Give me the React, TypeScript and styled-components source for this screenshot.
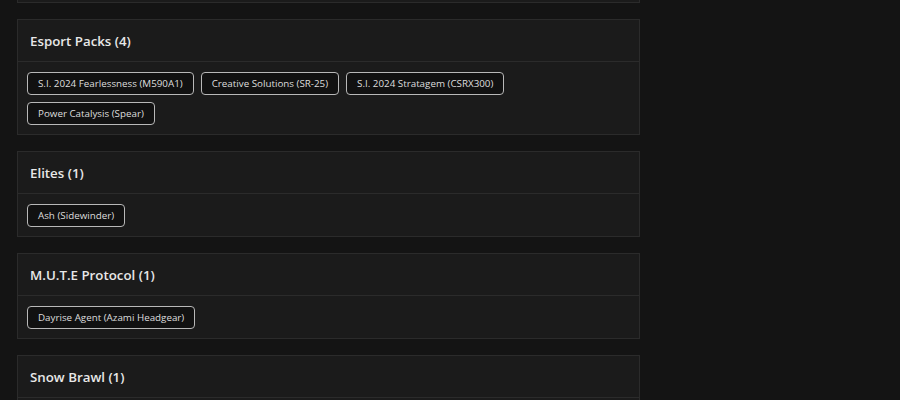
import React from 'react';
import styled, { createGlobalStyle } from 'styled-components';

const GlobalStyle = createGlobalStyle`
  html, body {
    margin: 0;
    padding: 0;
    background: #141414;
    font-family: 'Open Sans', 'Noto Sans', Arial, sans-serif;
    color: #e6e6e6;
  }
`;

const St = {
  Page: styled.div`
    height: 400px;
    overflow: hidden;
    padding-left: 17px;
  `,
  List: styled.div`
    display: flex;
    flex-direction: column;
    gap: 16px;
    width: 623px;
    margin-top: -83px;
  `,
  Card: styled.section`
    background: #1b1b1b;
    border: 1px solid #2b2b2b;
  `,
  CardHeader: styled.div`
    height: 41px;
    display: flex;
    align-items: center;
    padding: 0 12px;
    border-bottom: 1px solid #2b2b2b;
    font-size: 13.3px;
    font-weight: 600;
    color: #e8e8e8;
  `,
  CardBody: styled.div`
    display: flex;
    flex-wrap: wrap;
    gap: 7px;
    padding: 10px 10px 9px 9px;
  `,
  Chip: styled.span`
    display: inline-block;
    padding: 4px 10px;
    line-height: 13px;
    font-size: 9.8px;
    color: #dedede;
    background: #111111;
    border: 1px solid #b8b8b8;
    border-radius: 4px;
    white-space: nowrap;
  `,
};

interface Group {
  title: string;
  items: string[];
}

const groups: Group[] = [
  { title: 'Pro League (1)', items: ['Vigil (Frosted Tactics)'] },
  {
    title: 'Esport Packs (4)',
    items: [
      'S.I. 2024 Fearlessness (M590A1)',
      'Creative Solutions (SR-25)',
      'S.I. 2024 Stratagem (CSRX300)',
      'Power Catalysis (Spear)',
    ],
  },
  { title: 'Elites (1)', items: ['Ash (Sidewinder)'] },
  { title: 'M.U.T.E Protocol (1)', items: ['Dayrise Agent (Azami Headgear)'] },
  { title: 'Snow Brawl (1)', items: ['Frost (Snow Angel)'] },
];

const App: React.FC = () => {
  return (
    <St.Page>
      <GlobalStyle />
      <St.List>
        {groups.map((group) => (
          <St.Card key={group.title}>
            <St.CardHeader>{group.title}</St.CardHeader>
            <St.CardBody>
              {group.items.map((item) => (
                <St.Chip key={item}>{item}</St.Chip>
              ))}
            </St.CardBody>
          </St.Card>
        ))}
      </St.List>
    </St.Page>
  );
};

export default App;
